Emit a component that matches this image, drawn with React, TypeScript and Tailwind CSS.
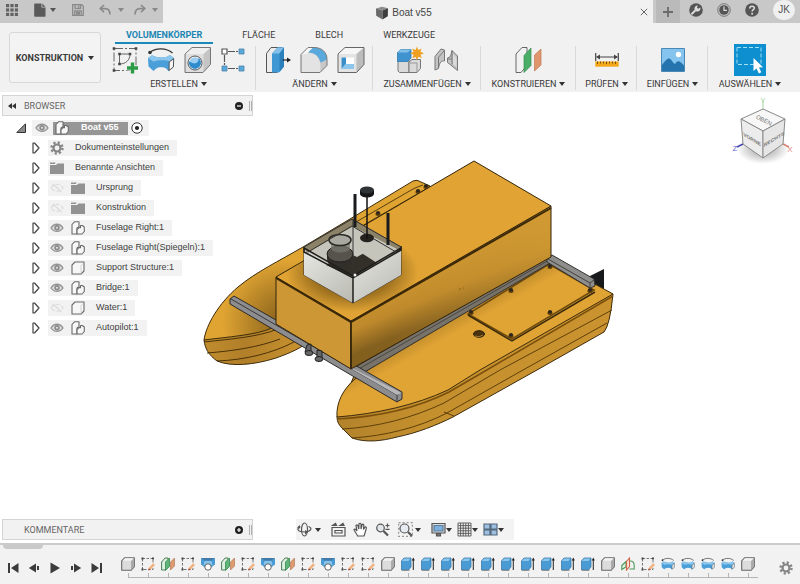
import React from "react";

type IconProps = { className?: string };

function Caret({ className = "text-[#333]" }: IconProps) {
  return (
    <svg viewBox="0 0 6 4" className={`h-1 w-[6px] shrink-0 ${className}`} fill="currentColor" aria-hidden="true">
      <path d="M0 0h6L3 4z" />
    </svg>
  );
}

/* ---------- title bar ---------- */

function AppsIcon() {
  return (
    <svg viewBox="0 0 12 12" className="h-3 w-3" fill="#636363" aria-hidden="true">
      {[0, 4.4, 8.8].map((y) =>
        [0, 4.4, 8.8].map((x) => <rect key={`${x}-${y}`} x={x} y={y} width="3.2" height="3.2" />)
      )}
    </svg>
  );
}

function DocIcon() {
  return (
    <svg viewBox="0 0 12 14" className="h-[14px] w-3" fill="#5a5a5a" aria-hidden="true">
      <path d="M1 0.5h6.5v4H11.5v8.500a.8.8 0 0 1-.8.8H1a.8.8 0 0 1-.8-.8V1.300A.8.8 0 0 1 1 .5z" />
      <path d="M8.300.5l3.200 3.300H8.300z" />
    </svg>
  );
}

function SaveIcon() {
  return (
    <svg viewBox="0 0 12 12" className="h-3 w-3" fill="none" stroke="#8a8a8a" strokeWidth="1.300" aria-hidden="true">
      <path d="M.7.7h9l1.600 1.600v9H.7z" />
      <path d="M3.200.7v3.800h5.400V.7M2.800 11.300V7h6.400v4.300M4 8.600h4M4 10h4" />
      <path d="M6.600 1.300v2.300" strokeWidth="1.600" />
    </svg>
  );
}

function UndoIcon({ flip = false }: { flip?: boolean }) {
  return (
    <svg viewBox="0 0 12 12" className={`h-3 w-3 ${flip ? "-scale-x-100" : ""}`} fill="none" stroke="#8a8a8a" strokeWidth="1.600" aria-hidden="true">
      <path d="M5 1L1.200 4.600 5 8.200" />
      <path d="M1.500 4.600h4.800c3 0 4.600 2 4.600 6" />
    </svg>
  );
}

function TitleBar() {
  return (
    <header className="flex h-[23px] bg-[#f1f1f1]">
      <div className="flex w-[163px] items-center bg-[#c8c8c8] pb-[3px] pl-[6px]">
        <button aria-label="Apps"><AppsIcon /></button>
        <button aria-label="Datei" className="ml-4 flex items-center gap-1"><DocIcon /><Caret className="text-[#555]" /></button>
        <button aria-label="Speichern" className="ml-4"><SaveIcon /></button>
        <button aria-label="Rückgängig" className="ml-[15px] flex items-center gap-[7px]"><UndoIcon /><Caret className="text-[#888]" /></button>
        <button aria-label="Wiederholen" className="ml-[10px] flex items-center gap-[6px]"><UndoIcon flip /><Caret className="text-[#888]" /></button>
      </div>
      <div className="flex flex-1 items-center">
        <h1 className="flex flex-1 items-center justify-center gap-[3px] pt-[2px] pl-1 text-[10px] leading-3 text-[#444]">
          <svg viewBox="0 0 14 14" className="h-[14px] w-[14px]" aria-hidden="true">
            <path d="M1 2.500L7 .8l6 1.400-5.500 2.300z" fill="#8b8b8b" />
            <path d="M1 2.500l6.500 2v9L1.200 9.800z" fill="#6a6a6a" />
            <path d="M13 2.200L7.500 4.500v9l5.300-3.200z" fill="#3c3c3c" />
          </svg>
          Boat v55
        </h1>
        <button aria-label="Schließen" className="mr-[5px]">
          <svg viewBox="0 0 8 8" className="h-2 w-2" stroke="#666" aria-hidden="true"><path d="M.8.8l6.400 6.400M7.200.8L.8 7.200" /></svg>
        </button>
      </div>
      <div className="flex items-center bg-[#c8c8c8] pl-[3px]">
        <button aria-label="Neues Dokument" className="flex h-full w-6 items-center justify-center bg-[#bababa]">
          <svg viewBox="0 0 10 10" className="h-[10px] w-[10px]" stroke="#6b6b6b" strokeWidth="1.800" aria-hidden="true"><path d="M5 0v10M0 5h10" /></svg>
        </button>
        <div className="flex h-full items-center gap-[14px] pr-[5px] pb-[3px] pl-[9px]">
          <button aria-label="Erweiterungen">
            <svg viewBox="0 0 14 14" className="h-[14px] w-[14px]" aria-hidden="true">
              <circle cx="7" cy="7" r="6.800" fill="#555" />
              <path d="M2.500 11.200l4-4" stroke="#dcdcdc" strokeWidth="2" />
              <path d="M11.300 4.600a3 3 0 1 1-2.600-2L8 4.800l1.200 1z" fill="#dcdcdc" />
            </svg>
          </button>
          <button aria-label="Auftragsstatus">
            <svg viewBox="0 0 14 14" className="h-[14px] w-[14px]" aria-hidden="true">
              <circle cx="7" cy="7" r="6.300" fill="none" stroke="#777" />
              <circle cx="7" cy="7" r="4.800" fill="#555" />
              <path d="M7 3.500V7.400h3" stroke="#ddd" strokeWidth="1.200" fill="none" />
            </svg>
          </button>
          <button aria-label="Hilfe">
            <svg viewBox="0 0 14 14" className="h-[14px] w-[14px]" aria-hidden="true">
              <circle cx="7" cy="7" r="6.800" fill="#555" />
              <path d="M4.800 5.400c0-3 4.500-2.800 4.500-.2 0 1.500-2.200 1.500-2.200 3.400" stroke="#ddd" strokeWidth="1.500" fill="none" />
              <circle cx="7.100" cy="10.700" r="1" fill="#ddd" />
            </svg>
          </button>
          <button className="h-5 w-[22px] rounded-full bg-[#f0f0f0] text-[10px] leading-none text-[#555]">JK</button>
        </div>
      </div>
    </header>
  );
}

/* ---------- toolbar drawings ---------- */

const BLUE = "#5aa9dc";
const EDGE = "#777";

function SketchTool() {
  return (
    <svg viewBox="0 0 26 28" className="h-7 w-[26px]" fill="none" stroke="#666" aria-hidden="true">
      <path d="M2 2.500h22v22H2z" strokeDasharray="9 2 2 2" />
      <path d="M7.500 18V8H18c0 6-4 10-10.500 10" />
      <g fill="#444" stroke="none">
        <path d="M.7 1.200h2.600v2.600H.7zM22.700 1.200h2.600v2.600h-2.600zM.7 23.200h2.600v2.600H.7zM6.200 6.700h2.600v2.600H6.200zM16.700 6.700h2.600v2.600h-2.600zM6.200 16.700h2.600v2.600H6.200z" />
      </g>
      <path d="M20.500 16v11.500M14.500 22h11.500" stroke="#f1f1f1" strokeWidth="5" />
      <path d="M20.500 16.500v11M15 22h11" stroke="#2c9b47" strokeWidth="3.400" />
    </svg>
  );
}

function RevolveTool({ className = "h-7 w-7" }: IconProps) {
  return (
    <svg viewBox="0 0 28 28" className={className} aria-hidden="true">
      <path d="M2.500 6.500c6-5 17-5 23 .5" fill="none" stroke="#333" strokeWidth="1.300" />
      <circle cx="3" cy="6.500" r="1.800" fill="#333" />
      <path d="M1 12l4-2.800c6 3 14 3 18-.3l4 3-.5 9-5 4.300-2-2.500c-3-1.800-8-1.800-10.500 0L6.500 25 1.500 20.500z" fill="#4a9fd8" />
      <path d="M1 12l4-2.800c6 3 14 3 18-.3l4 3-4.500 3.500c-4-1.500-12-1.500-16 .3z" fill="#8cc6ec" />
      <path d="M22.200 16l4.500-3.300-.3 8.300-4.400 3.500z" fill="#f5f5f5" stroke="#555" />
    </svg>
  );
}

function HoleTool() {
  return (
    <svg viewBox="0 0 28 28" className="h-7 w-7" aria-hidden="true">
      <path d="M1 8l7-6.500h18.500v17L19 26.500H1z" fill="#c4c4c4" />
      <path d="M1 8l7-6.500h18.500L19.500 8z" fill="#efefef" />
      <path d="M1.500 8h18v18h-18z" fill="#dedede" />
      <path d="M1 8l7-6.500h18.500v17L19 26.500H1z" fill="none" stroke={EDGE} />
      <circle cx="11" cy="17" r="7" fill="#fafafa" stroke="#555" />
      <circle cx="11" cy="17" r="5.800" fill="#9ccdf0" />
      <path d="M5.200 15a6 6 0 1 0 9.300-3c.5 4-2.500 6.500-6 5-1.500-.5-2.500-1-3.300-2z" fill="#2f8bcb" />
    </svg>
  );
}

function PatternTool() {
  return (
    <svg viewBox="0 0 24 28" className="h-7 w-6" aria-hidden="true">
      <path d="M3.500 9v10M7 5.500h10M7 22.500h10" stroke="#555" strokeWidth="1.200" strokeDasharray="7 1 2 0" />
      <path d="M1 3h5v5H1z" fill="#fff" stroke="#555" strokeWidth="1.200" />
      <g fill={BLUE} stroke="#4b83a8" strokeWidth=".8">
        <path d="M18 3h5v5h-5zM18 20h5v5h-5zM1 20h5v5H1z" />
      </g>
    </svg>
  );
}

function PressPullTool() {
  return (
    <svg viewBox="0 0 26 28" className="h-7 w-[26px]" aria-hidden="true">
      <path d="M1.500 7.500L6 1.500h11v18l-5 7H1.500z" fill="#ececec" stroke="#555" />
      <path d="M7 7.500l5.500-6H19v19l-5 6H7z" fill="#3f98d3" />
      <path d="M7 7.500l5.500-6H19l-4.500 6z" fill="#82c0ea" />
      <path d="M14.500 7.500l4.500-6v19l-4.500 5.500z" fill="#2b80bb" />
      <path d="M17.500 14h6" stroke="#222" strokeWidth="1.200" />
      <path d="M22 11.500l4 2.500-4 2.500z" fill="#222" />
    </svg>
  );
}

function FilletTool() {
  return (
    <svg viewBox="0 0 28 28" className="h-7 w-7" aria-hidden="true">
      <path d="M1 8.500l7-7h6c8 0 13 5 13 12v6l-7 7H1z" fill="#e3e3e3" />
      <path d="M11 7.500c5 0 9 5 9.500 12V26l6.500-6.500v-6z" fill="#c7c7c7" />
      <path d="M12 1.500h2c8 0 13 5 13 12l-6.500 3c-1-5-4.500-9-9.500-9.500l-3-.5z" fill={BLUE} />
      <path d="M1 8.500l7-7h5L7 7.500z" fill="#f7f7f7" />
      <path d="M1 8.500l7-7h6c8 0 13 5 13 12v6l-7 7H1z" fill="none" stroke="#777" />
    </svg>
  );
}

function ShellTool() {
  return (
    <svg viewBox="0 0 28 28" className="h-7 w-7" aria-hidden="true">
      <path d="M1 8l7-6.500h19v17L19.500 26.500H1z" fill="#e3e3e3" />
      <path d="M1 8l7-6.500h19L19.500 8z" fill="#f6f6f6" />
      <path d="M19.500 8L27 1.500v17l-7.500 8z" fill="#bcbcbc" />
      <path d="M1 8l7-6.500h19v17L19.500 26.500H1z" fill="none" stroke="#666" />
      <path d="M4.500 11.500H17v11.500H4.500z" fill="#fff" />
      <path d="M4.500 11.500H9V18l-4.500 5z" fill="#3a8ec9" />
      <path d="M9 18h8v5H4.500z" fill="#8cc6ec" />
    </svg>
  );
}

function NewComponentTool() {
  return (
    <svg viewBox="0 0 28 28" className="h-7 w-7" aria-hidden="true">
      <path d="M2 14.500h11v12H3.500L2 25z" fill="#dadada" stroke="#777" />
      <path d="M13 16l3-2.500h8.500v9l-3.500 4h-8z" fill="#dadada" stroke="#777" />
      <path d="M13.500 17h7.500v9" fill="none" stroke="#999" />
      <path d="M1.500 6.500l3.500-3h10v8.500l-3 3.500H1.500z" fill="#3f93cf" stroke="#2f79ad" strokeWidth=".8" />
      <path d="M1.500 6.500l3.500-3h10l-3.500 3z" fill="#82c0ea" />
      <path d="M21 .5l1.300 3.500 3.300-1.500-1.200 3.300L28 7.200l-3.500 1.500 1.300 3.400-3.400-1.300L21 14.500l-1.300-3.600-3.400 1.400 1.300-3.500L14 7.300l3.500-1.500-1.300-3.400L19.600 4z" fill="#f0a020" />
    </svg>
  );
}

function JointTool() {
  return (
    <svg viewBox="0 0 26 28" className="h-7 w-[26px]" fill="#c4c4c4" stroke="#777" aria-hidden="true">
      <path d="M2 10.500L8 3l3.500 1v11c-3-.5-5 1-6 7.500L2 24z" />
      <path d="M5.500 11.300V22M5.500 11.300l6-7" fill="none" />
      <path d="M24.500 10L19 4.500l-1.500 6-3 1.500v4.500l2 1.500 8 6.500z" />
      <path d="M19 4.500v14M14.500 13H19" fill="none" />
      <path d="M20 8l3.500 4v9L20 18z" fill="#dadada" stroke="none" />
    </svg>
  );
}

function PlaneTool({ className = "h-7 w-7" }: IconProps) {
  return (
    <svg viewBox="0 0 28 28" className={className} aria-hidden="true">
      <path d="M1 8l6-6.500h5v18l-6 7H1z" fill="#f1f1f1" stroke="#666" />
      <path d="M9 9.500l7-7.500v17.500L9 26.500z" fill="#4aae68" stroke="#3b8c52" strokeWidth=".7" />
      <path d="M19.500 9L26 3v16l-6.500 6z" fill="#e0966c" stroke="#c07a52" strokeWidth=".7" />
    </svg>
  );
}

function MeasureTool() {
  return (
    <svg viewBox="0 0 24 28" className="h-7 w-6" aria-hidden="true">
      <path d="M.7 7v8M23.300 7v8M2 11h20" stroke="#444" strokeWidth="1.200" />
      <path d="M1 11l4-2.500v5zM23 11l-4-2.500v5z" fill="#444" />
      <path d="M.3 15.500h23.400v5.200H.3z" fill="#f3a71b" />
      <path d="M2.500 15.500v2.500M5.500 15.500v2M8.500 15.500v2M11.500 15.500v2.500M14.500 15.500v2M17.500 15.500v2M20.500 15.500v2.500" stroke="#7d5200" />
    </svg>
  );
}

function ImageTool() {
  return (
    <svg viewBox="0 0 24 28" className="h-7 w-6" aria-hidden="true">
      <path d="M.5 2.500h23v23H.5z" fill="#84c4ee" stroke="#4a88b5" />
      <circle cx="17.500" cy="8.500" r="2.700" fill="#fff" />
      <path d="M1 19c3-4 5-6.500 7-6.500s4 5 6 5.500c2-3 3-3 4.500-2.500 1.500.5 3 2.500 4.500 4v5.500H1z" fill="#2674ad" />
    </svg>
  );
}

function SelectTool() {
  return (
    <svg viewBox="0 0 32 32" className="h-8 w-8" aria-hidden="true">
      <path d="M0 0h32v32H0z" fill="#0e8fcf" />
      <path d="M3 3.500h24v17H3z" fill="none" stroke="#9fe0f4" strokeDasharray="4 2" />
      <path d="M19.500 14v13l3-2.600 2.300 5 2.500-1.200-2.300-4.700 4-.3z" fill="#fff" />
    </svg>
  );
}

type Group = { label: string; width: string; tools: [string, React.ReactNode][] };

const GROUPS: Group[] = [
  {
    label: "ERSTELLEN",
    width: "w-[155px]",
    tools: [["Skizze erstellen", <SketchTool />], ["Drehen", <RevolveTool />], ["Bohrung", <HoleTool />], ["Muster", <PatternTool />]],
  },
  { label: "ÄNDERN", width: "w-[117px]", tools: [["Drücken/Ziehen", <PressPullTool />], ["Abrundung", <FilletTool />], ["Schale", <ShellTool />]] },
  { label: "ZUSAMMENFÜGEN", width: "w-[108px]", tools: [["Neue Komponente", <NewComponentTool />], ["Gelenk", <JointTool />]] },
  { label: "KONSTRUIEREN", width: "w-[95px]", tools: [["Versatzebene", <PlaneTool />]] },
  { label: "PRÜFEN", width: "w-[61px]", tools: [["Messen", <MeasureTool />]] },
  { label: "EINFÜGEN", width: "w-[71px]", tools: [["Bild", <ImageTool />]] },
  { label: "AUSWÄHLEN", width: "w-[84px]", tools: [["Auswählen", <SelectTool />]] },
];

const TABS = ["VOLUMENKÖRPER", "FLÄCHE", "BLECH", "WERKZEUGE"];

function Toolbar() {
  return (
    <div className="flex h-[69px] bg-[#f1f1f1] font-['Roboto','Liberation_Sans',sans-serif] text-[9px] leading-3 text-[#3a3a3a]">
      <button className="mt-[9px] ml-[9px] flex h-[51px] w-[92px] items-center justify-center gap-[5px] rounded-[3px] border border-[#d8d8d8] bg-[#f3f3f3] font-bold">
        KONSTRUKTION <Caret />
      </button>
      <div className="flex flex-1 flex-col">
        <nav className="flex gap-[18px] pl-[14px]">
          {TABS.map((t, i) => (
            <button
              key={t}
              className={
                i === 0
                  ? "h-[21px] border-b-2 border-[#1b8ab8] px-[11px] pt-1 font-bold text-[#1b86b3]"
                  : "h-[21px] border-b-2 border-transparent px-[11px] pt-1"
              }
            >
              {t}
            </button>
          ))}
        </nav>
        <div className="flex flex-1">
          {GROUPS.map((g, i) => (
            <div key={g.label} className={`relative flex shrink-0 flex-col items-center ${g.width}`}>
              <div className="flex h-8 items-center gap-[9px]">
                {g.tools.map(([name, icon]) => (
                  <button key={name} aria-label={name}>{icon}</button>
                ))}
              </div>
              <button className="mt-[2px] flex items-center gap-[3px] whitespace-nowrap">
                {g.label} <Caret />
              </button>
              {i < GROUPS.length - 1 && <span className="absolute top-[2px] right-0 h-11 w-px bg-[#d9d9d9]" />}
            </div>
          ))}
        </div>
      </div>
    </div>
  );
}

/* ---------- browser tree ---------- */

function Eye({ off = false }: { off?: boolean }) {
  return (
    <svg viewBox="0 0 14 10" className="h-[10px] w-[14px]" fill="none" aria-hidden="true">
      {off ? (
        <g stroke="#dadada" strokeWidth="1.200">
          <path d="M1 5c3-5 9-5 12 0-3 4.500-9 4.500-12 0z" strokeDasharray="4 2" />
          <path d="M3 1l8.500 8" />
        </g>
      ) : (
        <>
          <path d="M1 5c3-5 9-5 12 0-3 4.500-9 4.500-12 0z" fill="#ddd" stroke="#929292" strokeWidth="1.300" />
          <circle cx="7" cy="4.800" r="2.700" fill="#8b8b8b" />
          <circle cx="7" cy="4.800" r="1" fill="#e6e6e6" />
        </>
      )}
    </svg>
  );
}

function Gear({ className = "h-[14px] w-[14px]" }: IconProps) {
  return (
    <svg viewBox="0 0 14 14" className={className} fill="none" stroke="#858585" aria-hidden="true">
      <circle cx="7" cy="7" r="3.500" strokeWidth="2.200" />
      <circle cx="7" cy="7" r="5.500" strokeWidth="2.400" strokeDasharray="2.160 2.160" />
    </svg>
  );
}

function Folder() {
  return (
    <svg viewBox="0 0 14 12" className="h-3 w-[14px]" fill="#929292" aria-hidden="true">
      <path d="M0 3h6l1.500-1.500H14V12H0zM0 .5h5.500L5 2H0z" />
    </svg>
  );
}

function Assembly() {
  return (
    <svg viewBox="0 0 14 14" className="h-[14px] w-[14px]" fill="#f7f7f7" stroke="#6b6b6b" strokeWidth="1.100" strokeLinejoin="round" aria-hidden="true">
      <path d="M1 3.500l2.500-2.700H8v5L6 7v6H1z" />
      <path d="M6 8.500L8 6.500l1.500.3V4.500h1.800l2 1.500v4.500L11 13H6z" />
    </svg>
  );
}

function Body() {
  return (
    <svg viewBox="0 0 14 14" className="h-[14px] w-[14px]" fill="#f7f7f7" stroke="#6b6b6b" strokeWidth="1.100" strokeLinejoin="round" aria-hidden="true">
      <path d="M1 4l3-3h9v9l-3 3H1z" />
      <path d="M10 12.500V4.500L12.500 2" stroke="#ccc" fill="none" strokeWidth=".8" />
    </svg>
  );
}

type Row = { name: string; icon: "gear" | "folder" | "assembly" | "body"; eye?: "on" | "off" };

const ROWS: Row[] = [
  { name: "Dokumenteinstellungen", icon: "gear" },
  { name: "Benannte Ansichten", icon: "folder" },
  { name: "Ursprung", icon: "folder", eye: "off" },
  { name: "Konstruktion", icon: "folder", eye: "off" },
  { name: "Fuselage Right:1", icon: "assembly", eye: "on" },
  { name: "Fuselage Right(Spiegeln):1", icon: "assembly", eye: "on" },
  { name: "Support Structure:1", icon: "body", eye: "on" },
  { name: "Bridge:1", icon: "assembly", eye: "on" },
  { name: "Water:1", icon: "body", eye: "off" },
  { name: "Autopilot:1", icon: "assembly", eye: "on" },
];

const ROW_ICONS = { gear: <Gear />, folder: <Folder />, assembly: <Assembly />, body: <Body /> };

function PanelBar({ title, open }: { title: string; open: boolean }) {
  return (
    <div className="flex h-[21px] w-[251px] items-center border border-[#d4d4d4] bg-[#f2f2f2] font-['Roboto','Liberation_Sans',sans-serif] text-[9px] leading-3 text-[#666]">
      <span className="w-[21px] pl-[5px]">
        {open && (
          <svg viewBox="0 0 8 6" className="h-[6px] w-2" fill="#333" aria-hidden="true"><path d="M4 0v6L0 3zM8 0v6L4 3z" /></svg>
        )}
      </span>
      <h2 className="flex-1">{title}</h2>
      <button aria-label={open ? "Einklappen" : "Ausklappen"}>
        <svg viewBox="0 0 8 8" className="h-2 w-2" aria-hidden="true">
          <circle cx="4" cy="4" r="4" fill="#222" />
          <path d={open ? "M2 4h4" : "M2 4h4M4 2v4"} stroke="#fff" strokeWidth="1.200" />
        </svg>
      </button>
      <span className="ml-[6px] h-[10px] w-[3px] border-x border-[#b0b0b0]" />
    </div>
  );
}

function Browser() {
  return (
    <aside className="relative w-[251px] text-[9px] text-[#3f3f3f]">
      <PanelBar title="BROWSER" open />
      <div className="mt-1 flex h-4 items-center pl-[14px]">
        <button aria-label="Boat v55 zuklappen">
          <svg viewBox="0 0 10 10" className="h-[10px] w-[10px]" aria-hidden="true"><path d="M9.500.8v8.700H.8z" fill="#8a8a8a" stroke="#333" /></svg>
        </button>
        <div className="ml-[6px] flex h-4 items-center bg-[#f2f2f2] pr-[6px] pl-[3px]">
          <button aria-label="Sichtbarkeit Boat v55"><Eye /></button>
          <div className="ml-1 flex h-[13px] w-[75px] items-center bg-[#969696] pl-[2px] font-bold text-white">
            <Assembly />
            <span className="ml-3 whitespace-nowrap">Boat v55</span>
          </div>
          <label className="ml-[3px] flex">
            <input type="radio" defaultChecked aria-label="Boat v55 aktivieren" className="peer sr-only" />
            <svg viewBox="0 0 12 12" className="h-3 w-3" aria-hidden="true">
              <circle cx="6" cy="6" r="5.200" fill="#fff" stroke="#333" />
              <circle cx="6" cy="6" r="2.100" fill="#222" />
            </svg>
          </label>
        </div>
      </div>
      <ul className="mt-1 flex flex-col gap-1 pl-[30px]">
        {ROWS.map((r) => (
          <li key={r.name} className="flex h-4 items-center">
            <button aria-label={`${r.name} aufklappen`}>
              <svg viewBox="0 0 8 12" className="h-3 w-2" fill="#fff" stroke="#444" strokeWidth="1.200" strokeLinejoin="round" aria-hidden="true"><path d="M1 1h1.500L7 6l-4.500 5H1z" /></svg>
            </button>
            <div className="ml-2 flex h-4 items-center bg-[#f2f2f2] pr-2 pl-[2px]">
              {r.eye && (
                <button aria-label={`Sichtbarkeit ${r.name}`} className="mr-[7px]"><Eye off={r.eye === "off"} /></button>
              )}
              {ROW_ICONS[r.icon]}
              <span className="ml-[11px] whitespace-nowrap">{r.name}</span>
            </div>
          </li>
        ))}
      </ul>
    </aside>
  );
}

/* ---------- 3D view ---------- */

function Screw({ x, y }: { x: number; y: number }) {
  return (
    <g>
      <ellipse cx={x} cy={y + 1} rx="2.600" ry="1.900" fill="#5a3c0c" />
      <ellipse cx={x} cy={y - 0.4} rx="2" ry="1.600" fill="#2a2520" />
    </g>
  );
}

function Boat() {
  return (
    <svg viewBox="200 150 420 300" className="absolute top-[58px] left-[calc(50%-200px)] h-[300px] w-[420px]" role="img" aria-label="Katamaran">
      <defs>
        <radialGradient id="farDeck" gradientUnits="userSpaceOnUse" cx="284" cy="322" r="62">
          <stop offset="0.1" stopColor="#8c651c" />
          <stop offset="1" stopColor="#e0a433" />
        </radialGradient>
        <linearGradient id="farHull" gradientUnits="userSpaceOnUse" x1="204" y1="0" x2="305" y2="0">
          <stop offset="0" stopColor="#c08c2d" />
          <stop offset="0.4" stopColor="#b17f29" />
          <stop offset="1" stopColor="#c9922f" />
        </linearGradient>
        <linearGradient id="boxSide" gradientUnits="userSpaceOnUse" x1="440" y1="268" x2="458" y2="310">
          <stop offset="0" stopColor="#cb9430" />
          <stop offset="0.5" stopColor="#be892b" />
          <stop offset="1" stopColor="#84601f" />
        </linearGradient>
        <linearGradient id="boxSideLight" gradientUnits="userSpaceOnUse" x1="390" y1="0" x2="551" y2="0">
          <stop offset="0" stopColor="#c8922f" stopOpacity="0" />
          <stop offset="1" stopColor="#d39c34" stopOpacity="0.7" />
        </linearGradient>
        <linearGradient id="nearDeck" gradientUnits="userSpaceOnUse" x1="420" y1="335" x2="436" y2="363">
          <stop offset="0" stopColor="#c08b2b" />
          <stop offset="0.5" stopColor="#e0a434" />
        </linearGradient>
        <linearGradient id="hull" gradientUnits="userSpaceOnUse" x1="340" y1="0" x2="612" y2="0">
          <stop offset="0" stopColor="#b3832c" />
          <stop offset="0.3" stopColor="#c48f2d" />
          <stop offset="1" stopColor="#ca9330" />
        </linearGradient>
        <linearGradient id="white" x1="0" y1="0" x2="0.8" y2="1">
          <stop offset="0" stopColor="#e6e6e2" />
          <stop offset="1" stopColor="#bdbdb6" />
        </linearGradient>
        <radialGradient id="shadow">
          <stop offset="0.45" stopColor="#6b4b10" stopOpacity="0.8" />
          <stop offset="1" stopColor="#6b4b10" stopOpacity="0" />
        </radialGradient>
        <clipPath id="topFace"><path d="M276 277L474 161l77 45-200 115z" /></clipPath>
      </defs>

      {/* far hull */}
      <path d="M204 340c1 9 5 15 13 21 14 6 37 4 59-3 14-5 26-10 34-18l-34-22z" fill="url(#farHull)" stroke="#3d2c0c" />
      <path d="M204 340C206 325 219 303 238 287c18-15 41-26 65-40l47-28 63-38q4-2 8 1l9 4-120 92-38 50c-15 7-45 9-68 12z" fill="url(#farDeck)" stroke="#3d2c0c" />
      <path d="M204 342c27-3 54-5 74-13M207 353c26-2 52-6 73-14M217 361c28-1 56-8 77-19" fill="none" stroke="#4a3208" />
      <path d="M356 222l57-33q4-2 10-4M362 226l64-37" fill="none" stroke="#59400f" />
      <Screw x={378} y={213} /><Screw x={418} y={191} /><Screw x={426} y={186} />

      {/* rudder fin */}
      <path d="M588 277l16-8v24l-12-6z" fill="#17191a" />

      {/* near hull */}
      <path d="M337 417c0 5 2 8 5 11l10 10c14 5 30 3 45-1 20-4 40-12 56-20l84-47 67-38q6-7 9-38l-60-20-190 80z" fill="url(#hull)" stroke="#3d2c0c" />
      <path d="M337 417c-1-14 6-28 18-38l20-14 176-105 62 34-133 76-32 20c-32 15-72 24-111 27z" fill="url(#nearDeck)" stroke="#3d2c0c" />
      <path d="M337 419c39-2 80-11 112-27l31-18 133-78" fill="none" stroke="#7b4f0c" strokeWidth="1.500" />
      <path d="M342 429c36-2 70-11 102-26l56-33 112-60M352 438c32-2 66-10 95-25l76-43 84-47M444 412l10 4" fill="none" stroke="#5e4009" />

      {/* deck hatch */}
      <path d="M549 264l45 26-82 49-44-25z" fill="none" stroke="#6b480d" strokeWidth="1.500" />
      <path d="M468 315l44 26 83-49" fill="none" stroke="#3a2a0c" strokeWidth="1.500" />
      <Screw x={550} y={266} /><Screw x={511} y={290} /><Screw x={471} y={312} />
      <Screw x={511} y={335} /><Screw x={550} y={312} /><Screw x={590} y={290} />
      <ellipse cx="479" cy="334" rx="5.500" ry="3.300" fill="#4a3410" stroke="#2c1f08" />
      <path d="M475 336q4 2 8-1" stroke="#a3782a" fill="none" />

      {/* rear and side rails */}
      <path d="M350 370l200-114 0 7-187 110z" fill="#77736b" stroke="#33302b" />
      <path d="M357 370l192-110" stroke="#4a4740" />
      <path d="M547 258l5-3 42 24 1 7-5 2-43-26z" fill="#8e8e8c" stroke="#34322e" />
      <path d="M548 259l42 24v5M590 283l4-3" fill="none" stroke="#44423e" />

      {/* front rail */}
      <path d="M230 299l4-3 168 96v7l-5 3-167-98z" fill="#8d8d8f" stroke="#2c2b2a" />
      <path d="M231 299l166 96v6M397 395l5-3" fill="none" stroke="#38383a" />
      <path d="M352 368l50 25-5 2-47-27z" fill="#b7b7b9" />

      {/* bridge */}
      <path d="M276 277l75 44v48l-75-45z" fill="#ce9736" stroke="#33250a" />
      <path d="M351 321l200-115v51L351 369z" fill="url(#boxSide)" />
      <path d="M351 321l200-115v51L351 369z" fill="url(#boxSideLight)" stroke="#33250a" />
      <path d="M276 277L474 161l77 45-200 115z" fill="#e0a334" stroke="#33250a" />
      <ellipse cx="352" cy="272" rx="66" ry="40" fill="url(#shadow)" clipPath="url(#topFace)" />
      <path d="M276 278l75 44 200-114" fill="none" stroke="#3b2809" strokeWidth="2" />
      <path d="M351 321v48" stroke="#33250a" strokeWidth="1.600" />
      <path d="M459 289h2M463 288h1" stroke="#8a6118" />

      {/* autopilot housing */}
      <path d="M304 247l48-28 49 28v28l-48 28-49-28z" fill="#d3d2cd" stroke="#3c3a36" />
      <path d="M304 247l48-28 49 28-48 31z" fill="#c5c5bc" />
      <path d="M304 252l49 26v25l-49-28z" fill="url(#white)" />
      <path d="M353 278l48-28v25l-48 28z" fill="url(#white)" />
      <path d="M304 247l48-28v8l-45 26zM352 219l49 28v4l-49-25z" fill="#776b4c" opacity="0.75" />
      <path d="M326 265l14-9 20-4 17 11-24 14z" fill="#33302a" />
      <path d="M353 247l11 6-7 4-9-4z" fill="#c8c7bf" />
      <path d="M327 254v5a13 8 0 0 0 26 0v-5z" fill="#302f2b" />
      <ellipse cx="340" cy="254" rx="13" ry="8" fill="#55534c" stroke="#22211e" />
      <path d="M331 242v7a10 5 0 0 0 19 0v-7z" fill="#77766f" opacity="0.75" />
      <ellipse cx="340" cy="240" rx="11" ry="5.600" fill="#aaa9a1" stroke="#292825" strokeWidth="1.500" />
      <path d="M304 247v5l49 26 48-28v-4M353 278v25M304 248l49 28 48-28" fill="none" stroke="#1f1e1b" strokeWidth="1.500" />
      <path d="M304 247l48-28 49 28M353 220v50M308 252l44-26 44 26" fill="none" stroke="#35332f" />
      <ellipse cx="367" cy="238" rx="7" ry="4.200" fill="#24221f" />
      <path d="M367 195v44" stroke="#111" strokeWidth="1.500" />
      <path d="M360 190v4a7 3.500 0 0 0 14 0v-4z" fill="#151617" />
      <ellipse cx="367" cy="190" rx="7" ry="3.500" fill="#303335" />
      <path d="M355 194v33M388 213v32" stroke="#191b1c" strokeWidth="3" />
      <circle cx="355" cy="275" r="1.500" fill="#eee" />

      {/* rail clamps */}
      <g fill="#68686a" stroke="#222">
        <path d="M307 345l4-1v10l-6-2zM317 350l5 1v8l-5 1z" />
        <ellipse cx="309" cy="353" rx="4" ry="2.500" />
        <ellipse cx="319" cy="359" rx="4" ry="2.500" />
      </g>
    </svg>
  );
}

function ViewCube() {
  return (
    <svg viewBox="730 94 68 76" className="absolute top-[2px] right-[2px] h-[76px] w-[68px] font-['Liberation_Sans',sans-serif]" role="img" aria-label="ViewCube">
      <defs>
        <radialGradient id="cubeShadow">
          <stop offset="0.3" stopColor="#999" stopOpacity="0.7" />
          <stop offset="1" stopColor="#999" stopOpacity="0" />
        </radialGradient>
      </defs>
      <ellipse cx="763" cy="149" rx="26" ry="15" fill="url(#cubeShadow)" />
      <path d="M763 100v9" stroke="#a5d6a5" />
      <path d="M743 144l-6 3" stroke="#4545b0" strokeWidth="1.500" />
      <path d="M783 144l6 3" stroke="#d88070" strokeWidth="1.500" />
      <g stroke="#8a8a8a" strokeLinejoin="round">
        <path d="M763 109l22 10-22 12-22-12z" fill="#f7f7f7" />
        <path d="M741 119l22 12v27l-20-14z" fill="#ececec" />
        <path d="M785 119l-22 12v27l20-14z" fill="#e6e6e6" />
      </g>
      <g fill="#777" fontSize="5" fontWeight="bold" textAnchor="middle">
        <text transform="translate(763 122) rotate(27)" fontSize="6" fontWeight="normal">OBEN</text>
        <text transform="translate(752 141) skewY(31)">VORNE</text>
        <text transform="translate(774 141) skewY(-31)">RECHTS</text>
      </g>
      <g fontSize="8" textAnchor="middle">
        <text x="763" y="103" fill="#a8d8a8">Y</text>
        <text x="735" y="151" fill="#6464cf">Z</text>
        <text x="790" y="152" fill="#e08a80">X</text>
      </g>
    </svg>
  );
}

/* ---------- navigation bar ---------- */

function NavBar() {
  const s = { fill: "none", stroke: "#555", strokeWidth: 1.2, className: "h-[15px] w-[15px]", viewBox: "0 0 15 15", "aria-hidden": true } as const;
  return (
    <nav className="flex h-[21px] items-center bg-[#f3f3f3] pr-[10px]">
      <button aria-label="Orbit" className="flex w-[35px] items-center gap-[3px] pl-[1px]">
        <svg {...s}>
          <ellipse cx="7.500" cy="7.500" rx="3" ry="6.500" />
          <path d="M11.500 4.500c4 1.500 3 5-4 5.500C.5 10-1 6.500 3.500 4.800" />
          <path d="M8 8l3 2-3 2.500zM3 3v3.500l-3-1z" fill="#555" stroke="none" />
        </svg>
        <Caret />
      </button>
      <button aria-label="Ansicht nach" className="w-[22px]">
        <svg {...s}>
          <path d="M1 5.500h13V14H1zM4 8.500h7V11H4z" /><path d="M1.500 3.500l3-2 1 2zM9 3.500l3-2 1 2z" fill="#555" />
        </svg>
      </button>
      <button aria-label="Pan" className="w-[22px]">
        <svg {...s}>
          <path d="M4.500 14C4 11.500 1.500 10 1 7.500c1-.8 2 0 3 1.500L3 3.500c1-1 1.800-.5 2 .5l.8 3L6 1.800c.8-.9 1.800-.6 2 .4V7l1.200-4.500c.8-.8 1.800-.2 1.600.7L10.500 7.500 12 5c1-.4 1.600.3 1.300 1.300L12 11l-1 3z" fill="#fff" />
        </svg>
      </button>
      <button aria-label="Zoom" className="w-[22px]">
        <svg {...s}>
          <circle cx="5.500" cy="6" r="3.800" fill="#e0e6ec" /><path d="M8.500 9l4.500 4.500" strokeWidth="2.200" /><path d="M10.500 3.500h4M12.500 1.500v4M10.500 7.300h4" />
        </svg>
      </button>
      <button aria-label="Einpassen" className="flex w-[34px] items-center gap-[3px] pl-[1px]">
        <svg {...s}>
          <path d="M.6.6h13.800v13.800H.6z" strokeDasharray="2 2" stroke="#999" /><circle cx="6.500" cy="6.500" r="4.500" fill="#e6ecf2" /><path d="M10 10l4 4" strokeWidth="2.200" />
        </svg>
        <Caret className="-ml-px text-[#333]" />
      </button>
      <button aria-label="Anzeigeeinstellungen" className="flex w-[26px] items-center">
        <svg {...s}>
          <path d="M1 1.500h13v9.500H1z" fill="#ddd" /><path d="M3 3.500h9v5.500H3z" fill="#7fb0dd" stroke="#5b7f9f" /><path d="M5.500 11.500h4v2.500h-4z" fill="#777" />
        </svg>
        <Caret />
      </button>
      <button aria-label="Raster" className="flex w-[26px] items-center">
        <svg {...s} strokeWidth={0.9}>
          <path d="M1 1h13v13H1zM3.600 1v13M6.200 1v13M8.800 1v13M11.400 1v13M1 3.600h13M1 6.200h13M1 8.800h13M1 11.400h13" />
        </svg>
        <Caret />
      </button>
      <button aria-label="Ansichtsfenster" className="flex items-center">
        <svg {...s} stroke="#55697c">
          <path d="M1 2h6v5H1zM8 2h6v5H8zM1 8h6v5H1zM8 8h6v5H8z" fill="#9dbfe0" />
        </svg>
        <Caret />
      </button>
    </nav>
  );
}

/* ---------- timeline ---------- */

type Feature = "box" | "sketch" | "plane" | "loft" | "extrude" | "mirror" | "revolve";

const FEATURES: Feature[] = [
  "box", "sketch", "plane", "sketch", "loft", "plane", "sketch", "loft", "plane", "sketch", "loft", "sketch", "sketch", "box",
  "extrude", "extrude", "extrude", "extrude", "extrude", "extrude", "extrude", "extrude", "extrude", "extrude",
  "box", "mirror", "sketch", "revolve", "revolve", "revolve", "revolve", "box",
];

const FEATURE_ICONS: Record<Feature, React.ReactNode> = {
  box: (
    <svg viewBox="0 0 14 14" className="h-[14px] w-[14px]" aria-hidden="true">
      <path d="M.7 3.800L3.800.7h9.500v9l-3.200 3.600H.7z" fill="#dcdcdc" stroke="#666" strokeWidth="1.100" strokeLinejoin="round" />
      <path d="M10 4l3-3v8.700L10 13z" fill="#aaa" /><path d="M1.500 3.800L4 1.300h8.500L10 3.800z" fill="#f3f3f3" />
    </svg>
  ),
  sketch: (
    <svg viewBox="0 0 14 14" className="h-[14px] w-[14px]" fill="none" aria-hidden="true">
      <path d="M1.500 1.500h10.500v11H1.500z" stroke="#777" strokeDasharray="2.500 1.500" />
      <path d="M.5.5h2v2h-2zM11 .5h2v2h-2zM.5 11.500h2v2h-2z" fill="#444" />
      <path d="M13 7l-5 5.500" stroke="#f3b27c" strokeWidth="2.600" /><path d="M9 11.300l-2 2.200 2.600-.6z" fill="#a55" />
    </svg>
  ),
  plane: (
    <svg viewBox="0 0 14 14" className="h-[14px] w-[14px]" aria-hidden="true">
      <path d="M.6 5l3.500-4h3v8l-3 4H.6z" fill="#dff0e2" stroke="#4c7d58" />
      <path d="M4.500 5l4-4v8.500l-4 4z" fill="#5fb577" stroke="#3b8c52" strokeWidth=".8" />
      <path d="M9.500 5l4-4v8l-4 4z" fill="#e09a70" stroke="#a9704c" strokeWidth=".6" />
    </svg>
  ),
  loft: (
    <svg viewBox="0 0 14 14" className="h-[14px] w-[14px]" aria-hidden="true">
      <path d="M0 1l3 2h8l3-2v6.500l-4 3H4l-4-3z" fill="#4a9bd4" /><path d="M0 1h14l-3 2.500H3z" fill="#3f7ba6" /><path d="M3.500 4h7l1 4h-9z" fill="#86c2ea" />
      <circle cx="7" cy="10" r="3.200" fill="#fff" stroke="#666" />
    </svg>
  ),
  extrude: (
    <svg viewBox="0 0 14 14" className="h-[14px] w-[14px]" aria-hidden="true">
      <path d="M.5 4l2.500-3h7v9l-2.500 3H.5z" fill="#4a9bd4" stroke="#3779a8" strokeWidth=".8" /><path d="M1 4l2.300-2.600h6L7.500 4z" fill="#8cc6ec" />
      <path d="M1 13.300h7.500" stroke="#888" /><path d="M12.300 13V2" stroke="#333" strokeWidth="1.100" /><path d="M10.800 3.500l1.500-3 1.500 3z" fill="#222" />
    </svg>
  ),
  mirror: (
    <svg viewBox="0 0 14 14" className="h-[14px] w-[14px]" fill="none" strokeWidth="1.100" aria-hidden="true">
      <path d="M.8 8.500L5 4.500V10l-4.200 2.500z" stroke="#4c9a5c" fill="#dcefdc" /><path d="M5.500 4.500L8.500 1v8.500L5.500 13z" stroke="#d0664a" fill="#fbe3da" /><path d="M9 4c2.500 0 4.200 2 4.200 4.500V12H8.500" stroke="#4c9a5c" />
    </svg>
  ),
  revolve: <RevolveTool className="h-[14px] w-[14px]" />,
};

const PLAYBACK: [string, string][] = [
  ["Zum Anfang", "M1 1h2v10H1zM11.500 1v10L4 6z"],
  ["Schritt zurück", "M8 1.500v9L.8 6zM9 4h2v4H9z"],
  ["Wiedergabe", "M1.500.5L11 6l-9.500 5.500z"],
  ["Schritt vor", "M4 1.500v9L11.200 6zM1 4h2v4H1z"],
  ["Zum Ende", "M.5 1v10L8 6zM9 1h2v10H9z"],
];

function Timeline() {
  return (
    <footer className="h-[41px] border-t-2 border-[#cbcbcb] bg-[#f2f2f2]">
      <div className="ml-[3px] h-1 w-10 rounded-b-sm bg-[#c9c9c9]" />
      <div className="flex h-[35px] pr-[7px]">
        <div className="flex items-center gap-[9px] pt-[2px] pl-[7px]">
          {PLAYBACK.map(([name, d]) => (
            <button key={name} aria-label={name}>
              <svg viewBox="0 0 12 12" className="h-3 w-3" fill="#3b3b3b" aria-hidden="true"><path d={d} /></svg>
            </button>
          ))}
        </div>
        <ol className="ml-[15px] flex pt-2">
          {FEATURES.map((f, i) => (
            <li key={i} className="flex w-5 flex-col items-center">
              {FEATURE_ICONS[f]}
              <span className="mt-[2px] h-1 w-px bg-[#b5b5b5]" />
              <span className={i === 0 ? "ml-auto h-px w-[10px] bg-[#b5b5b5]" : "h-px w-full bg-[#b5b5b5]"} />
            </li>
          ))}
        </ol>
        <button aria-label="Einstellungen" className="ml-auto pt-[2px]"><Gear /></button>
      </div>
    </footer>
  );
}

export default function App() {
  return (
    <div className="flex min-h-screen flex-col bg-white font-['Liberation_Sans',Arial,sans-serif]">
      <TitleBar />
      <Toolbar />
      <main className="relative flex flex-1 flex-col justify-between pt-[3px] pb-[3px] pl-[2px]">
        <Boat />
        <ViewCube />
        <Browser />
        <div className="relative flex items-center gap-[43px]">
          <PanelBar title="KOMMENTARE" open={false} />
          <NavBar />
        </div>
      </main>
      <Timeline />
    </div>
  );
}
